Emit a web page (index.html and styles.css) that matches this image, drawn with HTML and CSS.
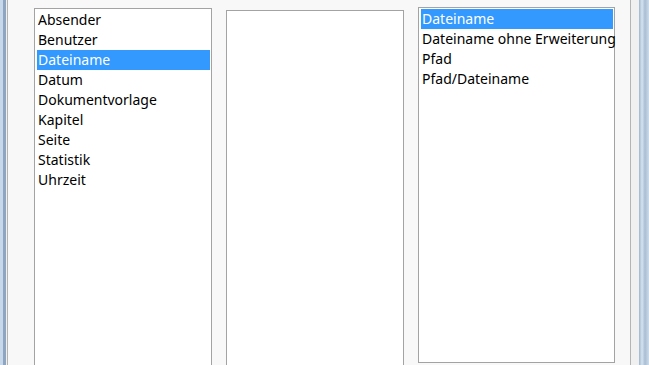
FILE: index.html
```html
<!DOCTYPE html>
<html lang="de">
<head>
<meta charset="utf-8"/>
<title>Feldbefehle - Dokument</title>
<link rel="stylesheet" href="styles.css">
</head>
<body>
<div class="window">
<div class="panel">
<div class="lists">
<ul class="listbox listbox-type">
<li>Absender</li>
<li>Benutzer</li>
<li class="selected">Dateiname</li>
<li>Datum</li>
<li>Dokumentvorlage</li>
<li>Kapitel</li>
<li>Seite</li>
<li>Statistik</li>
<li>Uhrzeit</li>
</ul>
<ul class="listbox listbox-select"></ul>
<ul class="listbox listbox-format">
<li class="selected">Dateiname</li>
<li>Dateiname ohne Erweiterung</li>
<li>Pfad</li>
<li>Pfad/Dateiname</li>
</ul>
</div>
</div>
</div>
</body>
</html>
```

FILE: styles.css
```css
* {
    margin: 0;
    padding: 0;
    box-sizing: border-box;
}

body {
    font-family: 'Noto Sans', 'Open Sans', sans-serif;
    font-size: 14px;
    color: #000;
    height: 365px;
    overflow: hidden;
    background: linear-gradient(90deg,
        #c6d8ea 0, #c6d8ea 3px, #8ea6bf 3px, #8ea6bf 6px,
        transparent 6px, transparent 639px,
        #9fb6cd 639px, #d5e3f0 642px, #a9bed3 645px, #cddcea 649px);
}

.window {
    margin-left: 6px;
    width: 633px;
    height: 365px;
    overflow: hidden;
    background: #f0f0f0;
    padding-left: 1px;
}

.panel {
    width: 624px;
    height: 365px;
    background: #f8f8f8;
    border-left: 1px solid #b4b4b4;
    border-right: 1px solid #b4b4b4;
    padding: 7px 13px 0 26px;
}

.lists {
    display: flex;
    gap: 14px;
    align-items: flex-start;
}

.listbox {
    list-style: none;
    background: #fff;
    border: 1px solid #a3a3a3;
    padding: 1px;
}

.listbox-type {
    width: 178px;
    height: 358px;
    margin-top: 1px;
    border-bottom: none;
}

.listbox-select {
    width: 178px;
    height: 355px;
    margin-top: 3px;
    border-bottom: none;
}

.listbox-format {
    width: 197px;
    height: 356px;
}

.listbox li {
    height: 20px;
    line-height: 20px;
    padding-left: 2px;
    white-space: nowrap;
}

.listbox li.selected {
    background: #3399ff;
    color: #fff;
    margin-left: 1px;
    padding-left: 1px;
}
```
